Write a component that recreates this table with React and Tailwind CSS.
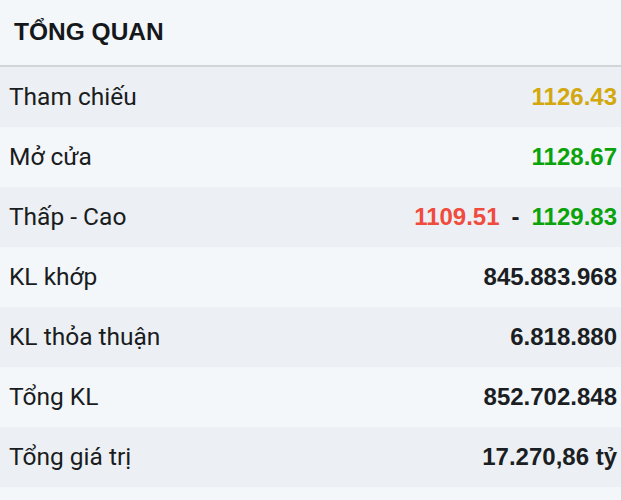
import React from 'react';

const rows = [
  { label: 'Tham chiếu', value: '1126.43', color: 'text-[#d2a80e]' },
  { label: 'Mở cửa', value: '1128.67', color: 'text-[#0ba30b]' },
  { label: 'Thấp - Cao', low: '1109.51', high: '1129.83' },
  { label: 'KL khớp', value: '845.883.968', color: 'text-[#1b1e22]' },
  { label: 'KL thỏa thuận', value: '6.818.880', color: 'text-[#1b1e22]' },
  { label: 'Tổng KL', value: '852.702.848', color: 'text-[#1b1e22]' },
  { label: 'Tổng giá trị', value: '17.270,86 tỷ', color: 'text-[#1b1e22]' },
];

const numFont = { fontFamily: '"Liberation Sans", Arial, sans-serif' };

export default function App() {
  return (
    <div className="h-[500px] w-[622px] overflow-hidden border-r border-[#cfd3d7] bg-[#f3f7fa]">
      <div className="flex h-[67px] items-center border-b-2 border-[#d2d5d8] bg-[#f3f7fa] pl-[14px]">
        <h2
          className="text-[24.5px] font-bold text-[#15181b]"
          style={numFont}
        >
          TỔNG QUAN
        </h2>
      </div>
      {rows.map((row, i) => (
        <div
          key={row.label}
          className={`flex h-[60px] items-center justify-between pl-[9px] pr-[4px] ${
            i % 2 === 0 ? 'bg-[#ecf0f4]' : 'bg-[#f3f7fa]'
          }`}
        >
          <span
            className="text-[24.5px] text-[#1a1c1e]"
            style={{ fontFamily: 'Roboto, "Liberation Sans", sans-serif' }}
          >
            {row.label}
          </span>
          {row.low ? (
            <span className="text-[24px] font-bold" style={numFont}>
              <span className="text-[#f04b3d]">{row.low}</span>
              <span className="mx-[12px] text-[#1b1e22]">-</span>
              <span className="text-[#0ba30b]">{row.high}</span>
            </span>
          ) : (
            <span className={`text-[24px] font-bold ${row.color}`} style={numFont}>
              {row.value}
            </span>
          )}
        </div>
      ))}
    </div>
  );
}
